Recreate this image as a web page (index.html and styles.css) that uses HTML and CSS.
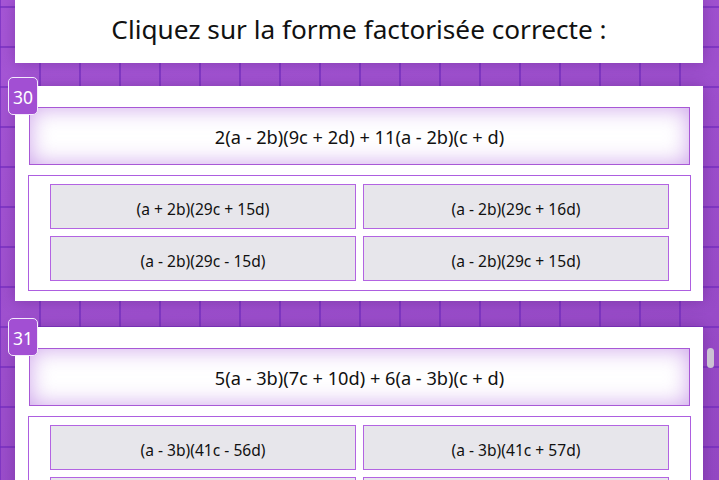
FILE: index.html
```html
<!DOCTYPE html>
<html lang="fr">
<head>
<meta charset="utf-8">
<title>Forme factorisée</title>
<link rel="stylesheet" href="styles.css">
</head>
<body>
<div class="page">
  <header class="title">Cliquez sur la forme factorisée correcte :</header>

  <section class="question">
    <div class="badge">30</div>
    <div class="expr">2(a - 2b)(9c + 2d) + 11(a - 2b)(c + d)</div>
    <div class="options">
      <button class="opt">(a + 2b)(29c + 15d)</button>
      <button class="opt">(a - 2b)(29c + 16d)</button>
      <button class="opt">(a - 2b)(29c - 15d)</button>
      <button class="opt">(a - 2b)(29c + 15d)</button>
    </div>
  </section>

  <section class="question">
    <div class="badge">31</div>
    <div class="expr">5(a - 3b)(7c + 10d) + 6(a - 3b)(c + d)</div>
    <div class="options">
      <button class="opt">(a - 3b)(41c - 56d)</button>
      <button class="opt">(a - 3b)(41c + 57d)</button>
      <button class="opt">(a - 3b)(41c + 56d)</button>
      <button class="opt">(a + 3b)(41c + 56d)</button>
    </div>
  </section>
</div>
<div class="thumb"></div>
</body>
</html>
```

FILE: styles.css
```css
html, body {
  margin: 0;
  padding: 0;
  height: 100%;
  overflow: hidden;
}
body {
  font-family: "Noto Sans", "Open Sans", sans-serif;
  color: #111;
  background-color: #9a4ecb;
  background-image:
    linear-gradient(to right, rgba(110, 40, 190, 0.6) 2px, transparent 2px),
    linear-gradient(to bottom, rgba(110, 40, 190, 0.6) 2px, transparent 2px),
    linear-gradient(160deg, #a656d6 0%, #9448c4 100%);
  background-size: 40px 40px, 40px 40px, 100% 100%;
  background-position: -1px 0, 0 6px, 0 0;
}
.page {
  padding: 0 16px 0 15px;
}
.title {
  height: 63px;
  background: #fff;
  display: flex;
  align-items: center;
  justify-content: center;
  font-size: 26.2px;
  padding-bottom: 5px;
  box-sizing: border-box;
  box-shadow: 0 0 14px rgba(60, 10, 90, 0.3);
}
.question {
  position: relative;
  margin-top: 23px;
  background: #fff;
  padding: 21px 13px 10px 14px;
  box-shadow: 0 0 14px rgba(60, 10, 90, 0.3);
}
.question + .question {
  margin-top: 26px;
}
.badge {
  position: absolute;
  left: -7px;
  top: -9px;
  width: 30px;
  height: 38px;
  box-sizing: border-box;
  border: 1px solid #f4eafc;
  border-radius: 5px;
  background: #a24fd3;
  color: #fff;
  font-size: 17.5px;
  padding-top: 1px;
  display: flex;
  align-items: center;
  justify-content: center;
}
.expr {
  height: 58px;
  box-sizing: border-box;
  border: 1px solid #a858d6;
  background: #fff;
  box-shadow: inset 0 0 22px rgba(170, 100, 220, 0.6);
  display: flex;
  align-items: center;
  justify-content: center;
  font-size: 18.2px;
  padding-top: 2px;
}
.options {
  margin: 10px -1px 0 -1px;
  border: 1px solid #ad5ee0;
  padding: 8px 21px 9px 21px;
  display: grid;
  grid-template-columns: 1fr 1fr;
  gap: 7px;
}
.opt {
  height: 45px;
  border: 1px solid #b364e2;
  background: #e7e6eb;
  font-family: "Noto Sans", "Open Sans", sans-serif;
  font-size: 15.6px;
  color: #111;
  padding: 4px 0 0 0;
  margin: 0;
}
.thumb {
  position: fixed;
  left: 707px;
  top: 348px;
  width: 7px;
  height: 20px;
  border-radius: 4px;
  background: #cbc3d3;
}
```
